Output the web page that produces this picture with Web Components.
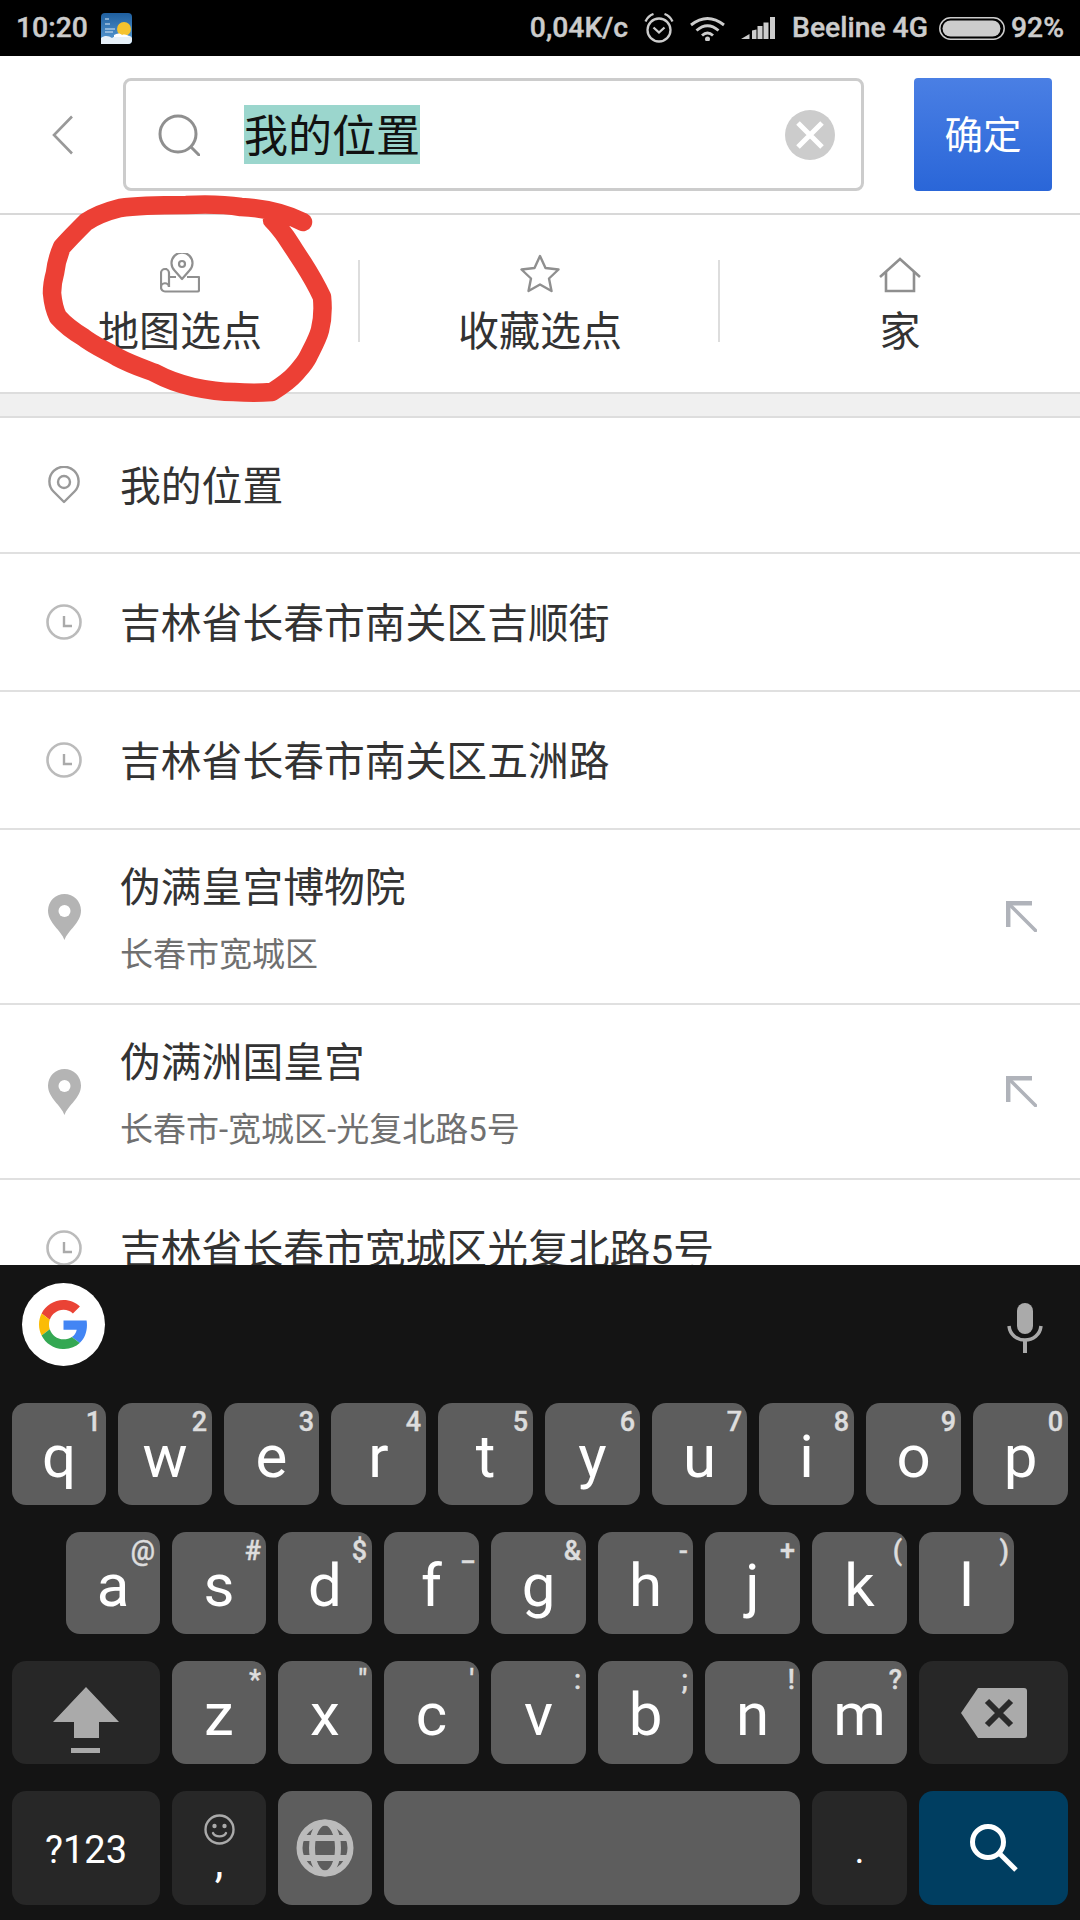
<!DOCTYPE html>
<html lang="zh">
<head>
<meta charset="utf-8">
<title>search</title>
<style>
  html, body { margin: 0; padding: 0; background: #fff; }
  body { width: 1080px; height: 1920px; overflow: hidden; position: relative; display: flex; flex-direction: column; font-family: Roboto, "Noto Sans CJK SC", sans-serif; }
</style>
</head>
<body>
<status-bar></status-bar>
<search-header value="我的位置" action="确定"></search-header>
<shortcut-bar>
  <shortcut-item icon="mapPick" label="地图选点"></shortcut-item>
  <shortcut-item icon="star" label="收藏选点"></shortcut-item>
  <shortcut-item icon="home" label="家"></shortcut-item>
</shortcut-bar>
<place-list>
  <place-row icon="pinOutline" h="136" title="我的位置"></place-row>
  <place-row icon="clock" title="吉林省长春市南关区吉顺街"></place-row>
  <place-row icon="clock" title="吉林省长春市南关区五洲路"></place-row>
  <place-row icon="pinFilled" h="175" title="伪满皇宫博物院" sub="长春市宽城区" arrow></place-row>
  <place-row icon="pinFilled" h="175" title="伪满洲国皇宫" sub="长春市-宽城区-光复北路5号" arrow></place-row>
  <place-row icon="clock" title="吉林省长春市宽城区光复北路5号"></place-row>
</place-list>
<soft-keyboard></soft-keyboard>
<scribble-mark></scribble-mark>

<script>
const ICONS = {
  back: [21, 40, '<path d="M20 1.5 2 20l18 18.5" fill="none" stroke="#999" stroke-width="2.6"/>'],
  search: [42, 42, '<g fill="none" stroke="#8f8f8f" stroke-width="3"><circle cx="20" cy="20" r="18"/><path d="M33 33l8 8" stroke-linecap="round"/></g>'],
  clear: [50, 50, '<circle cx="25" cy="25" r="25" fill="#ccc"/><path d="M13 13l24 24M37 13 13 37" stroke="#fff" stroke-width="5"/>'],
  mapPick: [40, 40, '<g fill="none" stroke="#8f8f8f" stroke-width="2.2" stroke-linejoin="round"><path d="M22 26l-7-8a10.500 10.500 0 1 1 14 0z"/><circle cx="22" cy="11" r="3"/><path d="M27 24h12v13a1.500 1.500 0 0 1-1.500 1.500H5A4 4 0 0 1 1 34.500V20a4 4 0 0 1 8 0v14"/><path d="M5 16h2M9 24h7M1 34.500A4 4 0 0 1 9 34"/></g>'],
  star: [40, 39, '<path d="M20 2l5.500 12 13 1.500-9.500 9 2.500 12.500L20 30.500 8.500 37 11 24.500l-9.500-9 13-1.500z" fill="none" stroke="#8f8f8f" stroke-width="2.4" stroke-linejoin="round"/>'],
  home: [42, 36, '<g fill="none" stroke="#8f8f8f" stroke-width="2.6"><path d="M1 20 21 2l20 18"/><path d="M7 15v19h28V15"/></g>'],
  pinOutline: [32, 38, '<g fill="none" stroke="#999" stroke-width="2.4"><path d="M16 36 5.500 25.500a14.600 14.600 0 1 1 21 0z" stroke-linejoin="round"/><circle cx="16" cy="16" r="6"/></g>'],
  clock: [36, 36, '<circle cx="18" cy="18" r="16.500" fill="none" stroke="#bbb" stroke-width="2.600"/><path d="M18 12v10h8" fill="none" stroke="#aaa" stroke-width="2.400"/>'],
  pinFilled: [33, 46, '<path d="M16.500 46C13 36 0 29 0 16.500a16.500 16.500 0 0 1 33 0C33 29 20 36 16.500 46z" fill="#b4b4b4"/><circle cx="16.500" cy="17" r="6" fill="#fff"/>'],
  arrow: [31, 31, '<path d="M2.200 26V2.200H26" fill="none" stroke="#b0b3ba" stroke-width="4.500"/><path d="M3 3l26.500 26.500" stroke="#b0b3ba" stroke-width="3.600" stroke-linecap="round"/>'],
  weather: [31, 31, '<defs><linearGradient id="w" x1="0" y1="0" x2="0" y2="1"><stop offset="0" stop-color="#1f5f9f"/><stop offset="1" stop-color="#5b9ed6"/></linearGradient></defs><rect width="31" height="31" rx="4" fill="url(#w)"/><circle cx="23" cy="16" r="7" fill="#f5c32e"/><path d="M0 31V25c4-3 8-2 11 0 5-3 9-1 11-1 3-2 7-2 9 1v2a4 4 0 0 1-4 4z" fill="#e6f0f8"/><path d="M13 22c3-2 6-2 8 0 3-1 6 0 7 2H13z" fill="#fff"/><path d="M4 6h4M4 11h5M4 16h10M4 19h8" stroke="#dbe9f5" stroke-width="1.200"/>'],
  alarm: [30, 30, '<g fill="none" stroke="#ccc" stroke-width="2.300"><circle cx="15" cy="17" r="11.500"/><path d="M9.500 14.500 15 19.500l5.500-5"/><path d="M1.500 8.500Q4 3 9.500 1M20.500 1Q26 3 28.500 8.500"/></g>'],
  wifi: [35, 25, '<g fill="none" stroke="#ccc" stroke-width="2.900"><path d="M1 9Q17.500-4 34 9"/><path d="M6.500 14.500Q17.500 5 28.500 14.500"/><path d="M12 19.500Q17.500 14.500 23 19.500"/></g><circle cx="17.500" cy="23" r="2.500" fill="#ccc"/>'],
  signal: [35, 22, '<path d="M0 22 8.500 17v5zM11 13.500l4.500-1V22H11zM16.500 9h5v13h-5zM22.500 5.500h5V22h-5zM29 0h5v22h-5z" fill="#ccc"/>'],
  battery: [66, 23, '<rect x=".8" y=".8" width="64.400" height="21.400" rx="10.700" fill="none" stroke="#ccc" stroke-width="1.500"/><rect x="3.500" y="3.500" width="58" height="16" rx="8" fill="#ccc"/>'],
  google: [49, 49, '<g transform="scale(1.021)"><path fill="#EA4335" d="M24 9.500c3.540 0 6.710 1.220 9.210 3.600l6.850-6.850C35.900 2.380 30.470 0 24 0 14.620 0 6.510 5.380 2.560 13.220l7.980 6.190C12.430 13.720 17.740 9.500 24 9.500z"/><path fill="#4285F4" d="M46.980 24.550c0-1.570-.15-3.090-.38-4.550H24v9.020h12.940c-.58 2.960-2.260 5.480-4.780 7.180l7.730 6c4.510-4.180 7.090-10.360 7.090-17.650z"/><path fill="#FBBC05" d="M10.530 28.590c-.48-1.450-.76-2.990-.76-4.590s.27-3.140.76-4.590l-7.980-6.190C.92 16.460 0 20.120 0 24c0 3.880.92 7.540 2.560 10.780l7.970-6.190z"/><path fill="#34A853" d="M24 48c6.480 0 11.930-2.130 15.890-5.810l-7.730-6c-2.150 1.450-4.920 2.300-8.160 2.300-6.260 0-11.570-4.220-13.470-9.910l-7.980 6.190C6.510 42.620 14.620 48 24 48z"/></g>'],
  mic: [36, 50, '<rect x="10" y="0" width="16" height="31" rx="8" fill="#aaa"/><path d="M2 23c1 9 8 14 16 14s15-5 16-14" fill="none" stroke="#aaa" stroke-width="3.500"/><path d="M18 36v14" stroke="#aaa" stroke-width="4"/>'],
  shift: [66, 66, '<path d="M33 0l33 35H46v16H21V35H0z" fill="#aaa"/><rect x="18" y="61" width="29" height="5" fill="#aaa"/>'],
  del: [66, 50, '<path d="M17 0h46a3 3 0 0 1 3 3v44a3 3 0 0 1-3 3H17L0 25z" fill="#aaa"/><path d="M26 13l24 24M50 13 26 37" stroke="#2a2a2a" stroke-width="6"/>'],
  globe: [58, 58, '<g fill="none" stroke="#bbb" stroke-width="6"><circle cx="29" cy="29" r="25.500"/><ellipse cx="29" cy="29" rx="13" ry="25.500"/><path d="M6 19h46M6 39h46"/></g>'],
  smile: [31, 31, '<g fill="none" stroke="#aaa" stroke-width="2.400"><circle cx="15.500" cy="15.500" r="14"/><path d="M9 19c2 4.500 11 4.500 13 0" stroke-linecap="round"/></g><circle cx="10.500" cy="12" r="2.200" fill="#aaa"/><circle cx="20.500" cy="12" r="2.200" fill="#aaa"/>'],
  glass: [52, 52, '<g fill="none" stroke="#fff" stroke-width="5"><circle cx="20" cy="20" r="15.500"/><path d="M31 31l17 17"/></g>']
};

class UiIcon extends HTMLElement {
  connectedCallback() {
    const [w, h, body] = ICONS[this.getAttribute("name")];
    this.attachShadow({ mode: "open" }).innerHTML = `
      <style>
        :host { display: block; flex: none; width: ${w}px; height: ${h}px; line-height: 0; }
        svg { display: block; }
      </style>
      <svg width="${w}" height="${h}" viewBox="0 0 ${w} ${h}">${body}</svg>`;
  }
}

class StatusBar extends HTMLElement {
  connectedCallback() {
    this.attachShadow({ mode: "open" }).innerHTML = `
      <style>
        :host { display: flex; flex: none; height: 56px; padding: 0 16px; box-sizing: border-box; background: #000; color: #ccc; align-items: center; justify-content: space-between; font: 500 28.3px/56px Roboto, sans-serif; -webkit-text-stroke: 0.4px #ccc; }
        .group { display: flex; align-items: center; }
        .left { gap: 13px; }
        .r1 { margin-left: 16px; } .r2 { margin-left: 16px; } .r3 { margin-left: 11px; } .r4 { margin-left: 6px; }
      </style>
      <div class="group left"><span>10:20</span><ui-icon name="weather"></ui-icon></div>
      <div class="group">
        <span>0,04K/c</span>
        <ui-icon class="r1" name="alarm"></ui-icon>
        <ui-icon class="r2" name="wifi"></ui-icon>
        <ui-icon class="r2" name="signal"></ui-icon>
        <span class="r2">Beeline 4G</span>
        <ui-icon class="r3" name="battery"></ui-icon>
        <span class="r4">92%</span>
      </div>`;
  }
}

class SearchHeader extends HTMLElement {
  connectedCallback() {
    this.attachShadow({ mode: "open" }).innerHTML = `
      <style>
        :host { display: flex; flex: none; height: 159px; box-sizing: border-box; padding: 0 28px 0 52px; align-items: center; gap: 50px; background: #fff; border-bottom: 2px solid #d8d8d8; font-family: Roboto, "Noto Sans CJK SC", sans-serif; }
        .box { flex: 1; height: 113px; box-sizing: border-box; border: 3px solid #ccc; border-radius: 8px; display: flex; align-items: center; padding: 0 26px 0 32px; }
        .value { margin-left: 44px; flex: 1; font-size: 44px; line-height: 54px; color: #111; }
        .value span { display: inline-block; padding-top: 5px; background: #9bd6cd; }
        button { width: 138px; height: 113px; border: 0; padding: 4px 0 0; border-radius: 4px; color: #fff; font: 38.500px/1 Roboto, "Noto Sans CJK SC", sans-serif; background: linear-gradient(#4a7fe4, #2a66d8); }
      </style>
      <ui-icon name="back"></ui-icon>
      <div class="box">
        <ui-icon name="search"></ui-icon>
        <div class="value"><span>${this.getAttribute("value")}</span></div>
        <ui-icon name="clear"></ui-icon>
      </div>
      <button>${this.getAttribute("action")}</button>`;
  }
}

class ShortcutBar extends HTMLElement {
  connectedCallback() {
    this.attachShadow({ mode: "open" }).innerHTML = `
      <style>
        :host { display: block; flex: none; background: #f0f0f0; border-bottom: 2px solid #ddd; padding-bottom: 22px; }
        .row { display: grid; grid-template-columns: repeat(3, 1fr); height: 177px; background: #fff; border-bottom: 2px solid #ddd; }
      </style>
      <div class="row"><slot></slot></div>`;
  }
}

class ShortcutItem extends HTMLElement {
  connectedCallback() {
    this.attachShadow({ mode: "open" }).innerHTML = `
      <style>
        :host { display: flex; flex-direction: column; align-items: center; height: 177px; box-sizing: border-box; padding-top: 38px; color: #333; font: 41px/52px Roboto, "Noto Sans CJK SC", sans-serif; }
        :host(:not(:last-child)) { background: linear-gradient(#ddd, #ddd) right 45px / 2px 82px no-repeat; }
        .icon { height: 40px; display: flex; align-items: flex-end; margin-bottom: 13px; }
      </style>
      <div class="icon"><ui-icon name="${this.getAttribute("icon")}"></ui-icon></div>
      <span>${this.getAttribute("label")}</span>`;
  }
}

class PlaceList extends HTMLElement {
  connectedCallback() {
    this.attachShadow({ mode: "open" }).innerHTML = `
      <style>
        :host { display: block; flex: 1; min-height: 0; overflow: hidden; background: #fff; }
      </style>
      <slot></slot>`;
  }
}

class PlaceRow extends HTMLElement {
  connectedCallback() {
    const sub = this.getAttribute("sub");
    const arrow = this.hasAttribute("arrow") ? '<ui-icon class="arrow" name="arrow"></ui-icon>' : "";
    this.attachShadow({ mode: "open" }).innerHTML = `
      <style>
        :host { display: flex; align-items: center; height: ${this.getAttribute("h") || 138}px; box-sizing: border-box; border-bottom: 2px solid #e0e0e0; font-family: Roboto, "Noto Sans CJK SC", sans-serif; }
        .slot { flex: none; width: 128px; margin-right: -8px; display: flex; justify-content: center; }
        .text { flex: 1; display: flex; flex-direction: column; gap: 19px; padding-top: ${sub ? 5 : 4}px; }
        .title { font-size: 40.800px; line-height: 52px; color: #333; white-space: nowrap; }
        .sub { font-size: 33px; line-height: 44px; color: #707070; white-space: nowrap; }
        .arrow { margin-right: 43px; }
      </style>
      <div class="slot"><ui-icon name="${this.getAttribute("icon")}"></ui-icon></div>
      <div class="text">
        <span class="title">${this.getAttribute("title")}</span>
        ${sub ? `<span class="sub">${sub}</span>` : ""}
      </div>
      ${arrow}`;
  }
}

class KbKey extends HTMLElement {
  connectedCallback() {
    const label = this.getAttribute("label");
    const sub = this.getAttribute("sub");
    this.attachShadow({ mode: "open" }).innerHTML = `
      <style>
        :host { display: flex; flex: 0 0 95px; position: relative; flex-direction: column; align-items: center; justify-content: center; border-radius: 14px; background: #5d5d5d; color: #fff; font: 400 60px/1 Roboto, sans-serif; }
        :host([tone="dark"]) { background: #272727; }
        :host([tone="action"]) { background: #003e61; }
        .label { padding-top: 5px; }
        :host([small]) .label { font-size: 38px; padding-top: 3px; line-height: 44px; }
        :host([stacked]) { padding-bottom: 8px; box-sizing: border-box; }
        :host([stacked]) .label { font-size: 44px; line-height: 26px; margin-top: 4px; padding-top: 0; height: 26px; }
        .sub { position: absolute; top: 4px; right: 5px; color: #ddd; font: 500 27px/30px Roboto, sans-serif; -webkit-text-stroke: 0.4px #ddd; }
      </style>
      <slot></slot>
      ${label ? `<span class="label">${label}</span>` : ""}
      ${sub ? `<span class="sub">${sub}</span>` : ""}`;
  }
}

class KeyRow extends HTMLElement {
  connectedCallback() {
    this.attachShadow({ mode: "open" }).innerHTML = `
      <style>
        :host { display: flex; flex: none; gap: 12px; height: ${this.getAttribute("h") || 102}px; padding-left: ${this.getAttribute("inset") || 0}px; }
      </style>
      <slot></slot>`;
  }
}

// the first keys of each row are a pixel narrower than the others
const keyMarkup = (row, narrow) => row.map(([l, s], i) => `<kb-key class="${i < narrow ? "narrow" : ""}" label="${l}" sub="${s}"></kb-key>`).join("");

class SoftKeyboard extends HTMLElement {
  connectedCallback() {
    const top = [["q", "1"], ["w", "2"], ["e", "3"], ["r", "4"], ["t", "5"], ["y", "6"], ["u", "7"], ["i", "8"], ["o", "9"], ["p", "0"]];
    const mid = [["a", "@"], ["s", "#"], ["d", "$"], ["f", "_"], ["g", "&amp;"], ["h", "-"], ["j", "+"], ["k", "("], ["l", ")"]];
    const low = [["z", "*"], ["x", "&quot;"], ["c", "'"], ["v", ":"], ["b", ";"], ["n", "!"], ["m", "?"]];
    this.attachShadow({ mode: "open" }).innerHTML = `
      <style>
        :host { display: block; flex: none; height: 655px; box-sizing: border-box; background: #141414; padding: 0 12px 15px; }
        .strip { height: 138px; display: flex; justify-content: space-between; padding: 18px 25px 0 10px; box-sizing: border-box; }
        .g { width: 83px; height: 83px; border-radius: 50%; background: #fff; display: flex; align-items: center; justify-content: center; }
        .mic { margin-top: 20px; }
        .rows { display: flex; flex-direction: column; gap: 27px; }
        .narrow { flex: 0 0 94px; }
        .left-mod { flex: 0 0 148px; }
        .right-mod { flex: 0 0 149px; }
        .space { flex: 0 0 416px; }
        .shift-icon { margin-top: 15px; }
      </style>
      <div class="strip">
        <div class="g"><ui-icon name="google"></ui-icon></div>
        <ui-icon class="mic" name="mic"></ui-icon>
      </div>
      <div class="rows">
        <key-row>${keyMarkup(top, 2)}</key-row>
        <key-row inset="54">${keyMarkup(mid, 3)}</key-row>
        <key-row h="103">
          <kb-key class="left-mod" tone="dark"><ui-icon class="shift-icon" name="shift"></ui-icon></kb-key>
          ${keyMarkup(low, 2)}
          <kb-key class="right-mod" tone="dark"><ui-icon name="del"></ui-icon></kb-key>
        </key-row>
        <key-row h="114">
          <kb-key class="left-mod" tone="dark" label="?123" small></kb-key>
          <kb-key class="narrow" tone="dark" label="," stacked><ui-icon name="smile"></ui-icon></kb-key>
          <kb-key class="narrow"><ui-icon name="globe"></ui-icon></kb-key>
          <kb-key class="space"></kb-key>
          <kb-key tone="dark" label="." small></kb-key>
          <kb-key class="right-mod" tone="action"><ui-icon name="glass"></ui-icon></kb-key>
        </key-row>
      </div>`;
  }
}

// red hand drawn circle on top of the screenshot
class ScribbleMark extends HTMLElement {
  connectedCallback() {
    this.attachShadow({ mode: "open" }).innerHTML = `
      <style>
        :host { position: absolute; left: 0; top: 0; width: 1080px; height: 500px; pointer-events: none; }
        svg { display: block; }
      </style>
      <svg width="1080" height="500" viewBox="0 0 1080 500">
        <path d="M303 222C285 213 262 208 241 207 222 204 205 204 186 205 163 205 140 205 120 208 104 212 95 216 86 222 76 232 68 240 62 247 57 258 56 265 55 273 53 280 52 287 52 293 53 304 55 311 58 317 66 326 73 331 83 337 93 345 105 350 117 357 130 364 142 368 155 373 168 380 180 384 193 387 207 390 220 392 234 392 248 393 260 393 272 392 283 385 290 380 296 373 302 366 305 363 308 357 314 345 318 338 320 330 323 318 323 307 322 297 316 284 310 274 303 263 297 254 292 246 286 237 281 230 277 225 272 220" fill="none" stroke="#ec4035" stroke-width="18.500" stroke-linecap="round" stroke-linejoin="round"/>
      </svg>`;
  }
}

customElements.define("ui-icon", UiIcon);
customElements.define("status-bar", StatusBar);
customElements.define("search-header", SearchHeader);
customElements.define("shortcut-bar", ShortcutBar);
customElements.define("shortcut-item", ShortcutItem);
customElements.define("place-list", PlaceList);
customElements.define("place-row", PlaceRow);
customElements.define("kb-key", KbKey);
customElements.define("key-row", KeyRow);
customElements.define("soft-keyboard", SoftKeyboard);
customElements.define("scribble-mark", ScribbleMark);
</script>
</body>
</html>
